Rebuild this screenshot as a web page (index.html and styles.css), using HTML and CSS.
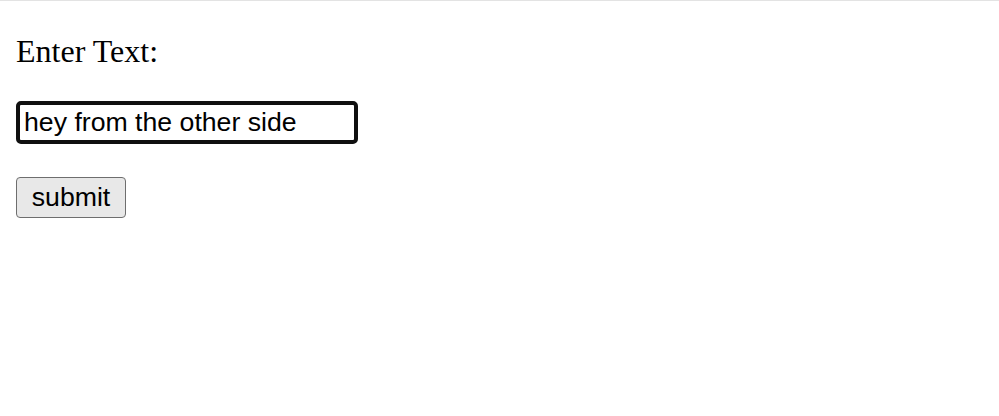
FILE: index.html
```html
<!DOCTYPE html>
<html>
<head>
<meta charset="utf-8">
<link rel="stylesheet" href="styles.css">
</head>
<body>
<main class="page">
  <form class="form">
    <label class="label" for="txt">Enter Text:</label>
    <input class="field" id="txt" type="text" value="hey from the other side">
    <button class="btn" type="button">submit</button>
  </form>
</main>
</body>
</html>
```
FILE: styles.css
```css
html, body {
  margin: 0;
  padding: 0;
  background: #ffffff;
}
.page {
  border-top: 1px solid #e3e3e3;
  padding: 32px 16px 0;
}
.form {
  display: flex;
  flex-direction: column;
  align-items: flex-start;
}
.label {
  font-family: "Liberation Serif", "Times New Roman", serif;
  font-size: 32px;
  line-height: 37px;
  color: #000;
}
.field {
  box-sizing: border-box;
  margin-top: 31px;
  width: 342px;
  height: 43px;
  border: 4px solid #101010;
  border-radius: 5px;
  padding: 0 4px;
  font-family: "Liberation Sans", Arial, sans-serif;
  font-size: 26.67px;
  color: #000;
  background: #fff;
  outline: none;
}
.btn {
  box-sizing: border-box;
  margin-top: 33px;
  width: 110px;
  height: 41px;
  padding: 0 12px;
  border: 1.5px solid #6e6e6e;
  border-radius: 4px;
  background: #e8e8e8;
  font-family: "Liberation Sans", Arial, sans-serif;
  font-size: 26.67px;
  color: #000;
}
```
